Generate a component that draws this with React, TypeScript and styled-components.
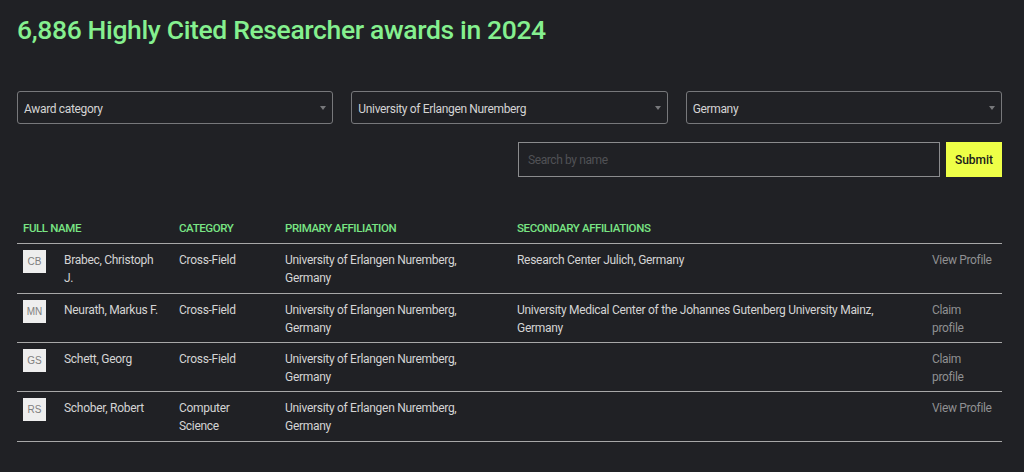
import styled, { createGlobalStyle } from "styled-components";

const GlobalStyle = createGlobalStyle`
  html, body {
    margin: 0;
    padding: 0;
    background: #202125;
  }
`;

const Page = styled.div`
  box-sizing: border-box;
  width: 1024px;
  height: 472px;
  padding: 14px 22px 0 17px;
  overflow: hidden;
  font-family: "Roboto", "Liberation Sans", sans-serif;
  color: #d8d8d8;
  background: #202125;
`;

const Title = styled.h1`
  margin: 0;
  font-size: 26.5px;
  line-height: 32px;
  font-weight: 500;
  letter-spacing: -0.36px;
  color: #85f08f;
`;

const Filters = styled.div`
  display: grid;
  grid-template-columns: repeat(3, 1fr);
  column-gap: 18px;
  margin-top: 45px;
`;

const SelectBox = styled.div`
  box-sizing: border-box;
  display: flex;
  align-items: center;
  justify-content: space-between;
  height: 33px;
  padding: 2px 6px 0;
  border: 1px solid #77787b;
  border-radius: 3px;
  font-size: 12px;
  letter-spacing: -0.34px;
  color: #d4d4d4;
`;

const Caret = styled.span`
  width: 0;
  height: 0;
  margin-top: -2px;
  border-left: 3px solid transparent;
  border-right: 3px solid transparent;
  border-top: 4px solid #77787b;
`;

const SearchRow = styled.div`
  display: flex;
  justify-content: flex-end;
  gap: 6px;
  margin-top: 18px;
`;

const SearchInput = styled.div`
  box-sizing: border-box;
  width: 422px;
  height: 35px;
  padding: 0 9px;
  display: flex;
  align-items: center;
  border: 1px solid #8b8c8e;
  font-size: 12px;
  letter-spacing: -0.4px;
  color: #505155;
`;

const SubmitButton = styled.div`
  box-sizing: border-box;
  width: 56px;
  height: 35px;
  display: flex;
  align-items: center;
  justify-content: center;
  background: #eeff47;
  color: #1a1a1a;
  font-size: 12px;
  font-weight: 500;
`;

const Table = styled.table`
  width: 985px;
  margin-top: 31px;
  border-collapse: collapse;
  table-layout: fixed;
  font-size: 12px;
  line-height: 18px;
  letter-spacing: -0.29px;
`;

const HeadCell = styled.th`
  height: 29px;
  padding: 0 6px 6px;
  vertical-align: bottom;
  text-align: left;
  font-size: 11.5px;
  font-weight: 500;
  letter-spacing: -0.4px;
  color: #79e584;
  border-bottom: 1px solid #a8a8a8;
`;

const Cell = styled.td`
  box-sizing: border-box;
  height: 49px;
  padding: 7px 12px 5px 6px;
  vertical-align: top;
  color: #d4d4d4;
`;

/* first and last rows come out a pixel taller in the original */
const Row = styled.tr`
  border-bottom: 1px solid #a8a8a8;

  &:first-child ${Cell}, &:last-child ${Cell} {
    height: 50px;
  }
`;

const NameWrap = styled.div`
  display: flex;
  gap: 18px;
`;

const Avatar = styled.span`
  flex: none;
  width: 23px;
  height: 23px;
  margin-top: -1px;
  display: flex;
  align-items: center;
  justify-content: center;
  background: #eeeeee;
  color: #808080;
  font-family: "Liberation Sans", sans-serif;
  font-size: 10px;
  letter-spacing: 0;
`;

const ProfileLink = styled.a`
  display: block;
  width: 62px;
  letter-spacing: -0.34px;
  color: #8f9092;
`;

type Person = {
  initials: string;
  name: string;
  category: string;
  secondary: string;
  action: string;
};

const people: Person[] = [
  { initials: "CB", name: "Brabec, Christoph J.", category: "Cross-Field", secondary: "Research Center Julich, Germany", action: "View Profile" },
  { initials: "MN", name: "Neurath, Markus F.", category: "Cross-Field", secondary: "University Medical Center of the Johannes Gutenberg University Mainz, Germany", action: "Claim profile" },
  { initials: "GS", name: "Schett, Georg", category: "Cross-Field", secondary: "", action: "Claim profile" },
  { initials: "RS", name: "Schober, Robert", category: "Computer Science", secondary: "", action: "View Profile" },
];

export default function App() {
  return (
    <Page>
      <GlobalStyle />
      <Title>6,886 Highly Cited Researcher awards in 2024</Title>
      <Filters>
        {["Award category", "University of Erlangen Nuremberg", "Germany"].map((label) => (
          <SelectBox key={label}>
            {label}
            <Caret />
          </SelectBox>
        ))}
      </Filters>
      <SearchRow>
        <SearchInput>Search by name</SearchInput>
        <SubmitButton>Submit</SubmitButton>
      </SearchRow>
      <Table>
        <colgroup>
          <col style={{ width: 156 }} />
          <col style={{ width: 106 }} />
          <col style={{ width: 232 }} />
          <col style={{ width: 415 }} />
          <col />
        </colgroup>
        <thead>
          <tr>
            <HeadCell>FULL NAME</HeadCell>
            <HeadCell>CATEGORY</HeadCell>
            <HeadCell>PRIMARY AFFILIATION</HeadCell>
            <HeadCell>SECONDARY AFFILIATIONS</HeadCell>
            <HeadCell />
          </tr>
        </thead>
        <tbody>
          {people.map((p) => (
            <Row key={p.initials}>
              <Cell>
                <NameWrap>
                  <Avatar>{p.initials}</Avatar>
                  <span>{p.name}</span>
                </NameWrap>
              </Cell>
              <Cell>{p.category}</Cell>
              <Cell>University of Erlangen Nuremberg, Germany</Cell>
              <Cell>{p.secondary}</Cell>
              <Cell>
                <ProfileLink>{p.action}</ProfileLink>
              </Cell>
            </Row>
          ))}
        </tbody>
      </Table>
    </Page>
  );
}
